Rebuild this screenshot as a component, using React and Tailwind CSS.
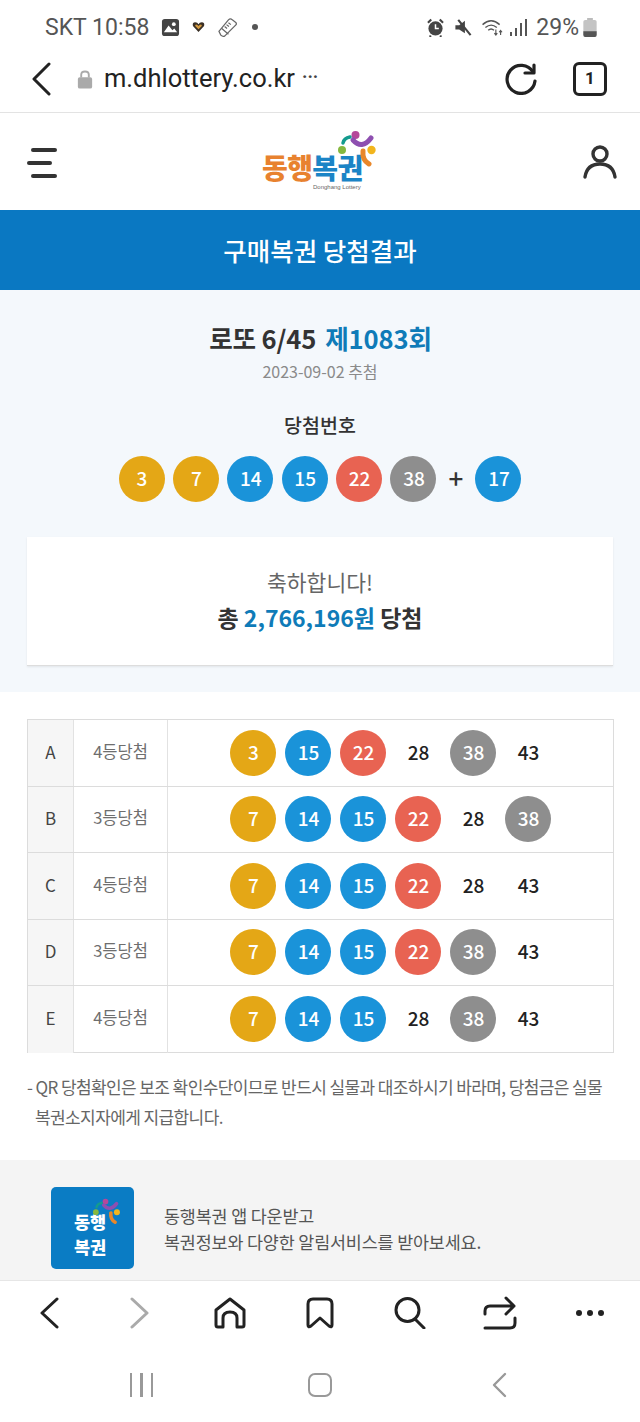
const Y = "bg-[#e4a716] text-white", Bl = "bg-[#1a93d9] text-white", R = "bg-[#e86352] text-white", G = "bg-[#8e8e8e] text-white", N = "bg-transparent text-[#222]";
const colorOf = (n) => (n <= 10 ? Y : n <= 20 ? Bl : n <= 30 ? R : G);

function Ball({ n, plain }) {
  return (
    <div className={`w-[46px] h-[46px] rounded-full flex items-center justify-center text-[19px] font-medium leading-none shrink-0 pb-[3px] pl-[1px] ${plain ? N : colorOf(n)}`}>
      {n}
    </div>
  );
}

function Figures({ className }) {
  return (
    <svg viewBox="0 0 42 38" className={className} fill="none" strokeLinecap="round">
      <circle cx="17.5" cy="5" r="4" fill="#b5489a" />
      <path d="M15 10 Q24 20 33 8" stroke="#8e4fb0" strokeWidth="5" />
      <circle cx="4" cy="20" r="4" fill="#86b83f" />
      <path d="M5 13 Q6 8 12 7" stroke="#149b8e" strokeWidth="3.5" />
      <circle cx="33.5" cy="20" r="4.2" fill="#f2b51d" />
      <path d="M31 34 Q24 30 25 21" stroke="#e8872a" strokeWidth="5" />
    </svg>
  );
}

function Row({ label, rank, nums, last }) {
  return (
    <div className={`flex h-[66.5px] ${last ? "" : "border-b border-[#dcdcdc]"}`}>
      <div className="w-[46px] bg-[#f6f6f6] border-r border-[#e2e2e2] flex items-center justify-center text-[17px] text-[#444] pb-[3px]">{label}</div>
      <div className="w-[94px] border-r border-[#e2e2e2] flex items-center justify-center text-[16.5px] text-[#6e6e6e] pb-[3px]">{rank}</div>
      <div className="flex-1 flex items-center justify-center gap-[9px]">
        {nums.map(([n, plain], i) => <Ball key={i} n={n} plain={plain} />)}
      </div>
    </div>
  );
}

const p = (n) => [n, true];
const b = (n) => [n, false];
const rows = [
  ["A", "4등당첨", [b(3), b(15), b(22), p(28), b(38), p(43)]],
  ["B", "3등당첨", [b(7), b(14), b(15), b(22), p(28), b(38)]],
  ["C", "4등당첨", [b(7), b(14), b(15), b(22), p(28), p(43)]],
  ["D", "3등당첨", [b(7), b(14), b(15), b(22), b(38), p(43)]],
  ["E", "4등당첨", [b(7), b(14), b(15), p(28), b(38), p(43)]],
];

export default function App() {
  return (
    <div className="w-[640px] h-[1422px] overflow-hidden bg-white flex flex-col font-['Noto_Sans_CJK_KR','Noto_Sans',sans-serif] text-[#333]">
      {/* status bar */}
      <div className="h-[50px] shrink-0 flex items-center pl-[45px] pr-[43px] pt-[4px] font-['Roboto',sans-serif] text-[#555]">
        <span className="text-[23px] leading-none w-[115px]">SKT 10:58</span>
        <svg viewBox="0 0 20 20" className="w-[19px] h-[19px] ml-[1px]">
          <rect x="1" y="1" width="18" height="18" rx="3" fill="#444" />
          <circle cx="13.5" cy="6.5" r="2" fill="#fff" />
          <path d="M3 15 L8 8 L12 13 L14 11 L17 15 Z" fill="#fff" />
        </svg>
        <svg viewBox="0 0 14 12" className="w-[13px] h-[12px] ml-[12px]">
          <path d="M7 11.5 L1 5 Q0 1 3.5 1 Q6 1 7 3 Q8 1 10.5 1 Q14 1 13 5 Z" fill="#3a3026" />
          <path d="M7 8.5 L3.5 5 Q3 3.2 4.5 3.2 Q6 3.2 7 5 Q8 3.2 9.5 3.2 Q11 3.2 10.5 5 Z" fill="#d3993f" />
        </svg>
        <svg viewBox="0 0 22 22" className="w-[21px] h-[21px] ml-[12px]" fill="none" stroke="#666" strokeWidth="1.3" strokeLinejoin="round">
          <path d="M2 15 L12 3 Q14 1 16 3 L20 6 Q21 8 19 9 L8 20 Q6 21 4 19 Z" />
          <path d="M5 12 L12 18 M12 6 L14.5 8 M10 8 L12.5 10 M8 10 L10.5 12" />
        </svg>
        <div className="w-[6px] h-[6px] rounded-full bg-[#555] ml-[14px]" />
        <div className="flex-1" />
        <svg viewBox="0 0 18 20" className="w-[17px] h-[19px]">
          <circle cx="9" cy="11" r="7.5" fill="#444" />
          <path d="M1 5 L4.5 1.5 M17 5 L13.5 1.5 M4 18.5 L3 20 M14 18.5 L15 20" stroke="#444" strokeWidth="2.2" />
          <path d="M9 6.5 V11 H12.5" stroke="#fff" strokeWidth="1.6" fill="none" />
        </svg>
        <svg viewBox="0 0 18 20" className="w-[18px] h-[19px] ml-[10px]">
          <path d="M1 7.5 H5 L11 3 V16 L5 12 H1 Z" fill="#444" />
          <path d="M4 2 L17 18" stroke="#444" strokeWidth="2.2" />
        </svg>
        <svg viewBox="0 0 24 20" className="w-[24px] h-[19px] ml-[9px]" fill="none" stroke="#555" strokeWidth="1.5">
          <path d="M1 7 Q10 -1 19 7 M4 10 Q10 5 16 10 M7 13 Q10 10 13 13" />
          <path d="M15 12 V18 M13.5 16 L15 18 L16.5 16 M20 18 V13 M18.5 15 L20 13 L21.5 15" strokeWidth="1.2" />
        </svg>
        <svg viewBox="0 0 17 19" className="w-[17px] h-[19px] ml-[5px]" fill="#555">
          <rect x="0" y="14" width="2" height="4" />
          <rect x="5" y="10" width="2" height="8" />
          <rect x="10" y="5" width="2" height="13" />
          <rect x="15" y="1" width="2" height="17" />
        </svg>
        <span className="text-[23px] leading-none ml-[9px]">29%</span>
        <svg viewBox="0 0 14 20" className="w-[14px] h-[19px] ml-[4px]">
          <rect x="4" y="0" width="6" height="3" fill="#bbb" />
          <rect x="0" y="2" width="14" height="18" rx="2" fill="#c4c4c4" />
          <path d="M0 14 H14 V18 Q14 20 12 20 H2 Q0 20 0 18 Z" fill="#555" />
        </svg>
      </div>

      {/* url bar */}
      <div className="h-[63px] shrink-0 flex items-center pl-[31px] pr-[33px] border-b border-[#e3e3e3] pb-[4px]">
        <svg viewBox="0 0 20 34" className="w-[20px] h-[34px]" fill="none" stroke="#222" strokeWidth="3" strokeLinecap="round" strokeLinejoin="round">
          <path d="M18 2 L3 17 L18 32" />
        </svg>
        <svg viewBox="0 0 16 20" className="w-[16px] h-[19px] ml-[26px]">
          <path d="M4 8 V5 Q4 1.5 8 1.5 Q12 1.5 12 5 V8" fill="none" stroke="#aaa" strokeWidth="2" />
          <rect x="0.5" y="7.5" width="15" height="12" rx="2" fill="#aaa" />
        </svg>
        <span className="ml-[11px] font-['Roboto',sans-serif] text-[25.5px] leading-none text-[#222]">m.dhlottery.co.kr</span>
        <span className="ml-[7px] font-['Roboto',sans-serif] text-[18px] leading-none text-[#444] -mt-[4px] font-bold">···</span>
        <div className="flex-1" />
        <svg viewBox="0 0 32 32" className="w-[32px] h-[32px]" fill="none" stroke="#222" strokeWidth="3.2" strokeLinecap="round" strokeLinejoin="round">
          <path d="M28 9 A14 14 0 1 0 30 18" />
          <path d="M29 2 V10 H20" />
        </svg>
        <div className="w-[34px] h-[34px] ml-[36px] border-[3px] border-[#222] rounded-[6px] flex items-center justify-center text-[17px] font-bold font-['Roboto',sans-serif] text-[#222]">1</div>
      </div>

      {/* header */}
      <div className="h-[97px] shrink-0 flex items-center justify-between pl-[27px] pr-[23px]">
        <div className="flex flex-col gap-[9px] w-[30px] mt-[2px]">
          <div className="w-[26px] h-[4px] rounded-full bg-[#333] ml-[4px]" />
          <div className="w-[25px] h-[4px] rounded-full bg-[#333]" />
          <div className="w-[26px] h-[4px] rounded-full bg-[#333] ml-[4px]" />
        </div>
        <div className="relative w-[120px] h-[66px] mt-[3px]">
          <div className="absolute left-[2px] top-[20px] text-[28px] font-black leading-[34px] tracking-[-0.6px] whitespace-nowrap">
            <span className="text-[#e8822f]">동행</span><span className="text-[#1b84c6]">복권</span>
          </div>
          <div className="absolute left-[53px] top-[53px] text-[6px] leading-[8px] text-[#666] font-['Liberation_Sans',sans-serif] whitespace-nowrap">Donghang Lottery</div>
          <Figures className="absolute left-[78px] top-[0px] w-[42px] h-[38px]" />
        </div>
        <svg viewBox="0 0 34 34" className="w-[34px] h-[34px]" fill="none" stroke="#333" strokeWidth="3.4" strokeLinecap="round">
          <circle cx="17" cy="9" r="7" />
          <path d="M2 32 Q4 19 17 19 Q30 19 32 32" />
        </svg>
      </div>

      {/* blue title */}
      <div className="h-[80px] shrink-0 bg-[#0a78c2] flex items-center justify-center text-white text-[25.5px] font-medium">구매복권 당첨결과</div>

      {/* summary */}
      <div className="h-[402px] shrink-0 bg-[#f4f8fc] flex flex-col items-center px-[27px]">
        <div className="mt-[28px] h-[40px] flex items-center text-[25.6px] font-bold text-[#333] leading-none tracking-[-0.15px] pl-[1px]">
          로또 6/45<span className="text-[#0f7bb8] ml-[9px]">제1083회</span>
        </div>
        <div className="mt-[1px] h-[24px] flex items-center text-[16px] text-[#8a8a8a]">2023-09-02 추첨</div>
        <div className="mt-[28px] h-[28px] flex items-center text-[19.5px] font-medium text-[#333]">당첨번호</div>
        <div className="mt-[17px] flex items-center">
          <div className="flex gap-[8.4px]">
            {[3, 7, 14, 15, 22, 38].map((n) => <Ball key={n} n={n} />)}
          </div>
          <div className="w-[39px] flex items-center justify-center text-[26px] font-medium text-[#333] leading-none pb-[3px]">+</div>
          <Ball n={17} />
        </div>
        <div className="mt-[35px] w-full h-[129px] bg-white border-b border-[#ddd] shadow-[0_1px_2px_rgba(0,0,0,0.08)] flex flex-col items-center justify-center pb-[3px]">
          <div className="text-[21.5px] text-[#666] leading-[34px]">축하합니다!</div>
          <div className="text-[23px] font-bold text-[#333] leading-[36px]">총 <span className="text-[#0f7bb8]">2,766,196원</span> 당첨</div>
        </div>
      </div>

      {/* results */}
      <div className="h-[468px] shrink-0 pl-[27px] pr-[26px] pt-[27px]">
        <div className="border border-[#dcdcdc] h-[334px]">
          {rows.map(([l, r, nums], i) => <Row key={l} label={l} rank={r} nums={nums} last={i === 4} />)}
        </div>
        <div className="mt-[19px] text-[17px] leading-[30px] text-[#666] tracking-[-0.6px]">
          <div className="whitespace-nowrap">- QR 당첨확인은 보조 확인수단이므로 반드시 실물과 대조하시기 바라며, 당첨금은 실물</div>
          <div className="pl-[8px]">복권소지자에게 지급합니다.</div>
        </div>
      </div>

      {/* app banner */}
      <div className="h-[120px] shrink-0 bg-[#f4f4f4] flex items-center pl-[51px] pt-[15px]">
        <div className="relative w-[83px] h-[82px] rounded-[5px] bg-[#0a7cc4]">
          <div className="absolute left-[23px] top-[22px] text-[17.5px] font-black leading-[25.5px] text-white">동행<br />복권</div>
          <Figures className="absolute left-[42px] top-[8px] w-[30px] h-[33px]" />
        </div>
        <div className="ml-[30px] mt-[2px] text-[17.4px] leading-[26px] text-[#555] tracking-[-0.15px]">
          <div>동행복권 앱 다운받고</div>
          <div>복권정보와 다양한 알림서비스를 받아보세요.</div>
        </div>
      </div>

      {/* browser toolbar */}
      <div className="h-[65px] shrink-0 border-t border-[#e6e6e6] grid grid-cols-7 px-[5px] bg-white">
        <div className="flex items-center justify-center pr-[3px]">
          <svg viewBox="0 0 20 32" className="w-[20px] h-[32px]" fill="none" stroke="#222" strokeWidth="3" strokeLinecap="round" strokeLinejoin="round"><path d="M18 2 L3 16 L18 30" /></svg>
        </div>
        <div className="flex items-center justify-center">
          <svg viewBox="0 0 20 32" className="w-[20px] h-[32px]" fill="none" stroke="#aaa" strokeWidth="3" strokeLinecap="round" strokeLinejoin="round"><path d="M2 2 L17 16 L2 30" /></svg>
        </div>
        <div className="flex items-center justify-center">
          <svg viewBox="0 0 34 32" className="w-[34px] h-[32px]" fill="none" stroke="#222" strokeWidth="3" strokeLinejoin="round"><path d="M3 13 L17 2 L31 13 V28 Q31 30 29 30 H24 V21 Q24 15 17 15 Q10 15 10 21 V30 H5 Q3 30 3 28 Z" /></svg>
        </div>
        <div className="flex items-center justify-center">
          <svg viewBox="0 0 30 32" className="w-[30px] h-[32px]" fill="none" stroke="#222" strokeWidth="3" strokeLinejoin="round"><path d="M3 7 Q3 2 8 2 H22 Q27 2 27 7 V28 Q27 31 24 29 L15 21 L6 29 Q3 31 3 28 Z" /></svg>
        </div>
        <div className="flex items-center justify-center">
          <svg viewBox="0 0 32 32" className="w-[32px] h-[32px]" fill="none" stroke="#222" strokeWidth="3" strokeLinecap="round"><circle cx="13.5" cy="13" r="11.5" /><path d="M21 22 L30 31" /></svg>
        </div>
        <div className="flex items-center justify-center">
          <svg viewBox="0 0 34 34" className="w-[34px] h-[34px]" fill="none" stroke="#222" strokeWidth="3" strokeLinecap="round" strokeLinejoin="round">
            <path d="M2 18 V15 Q2 10 7 10 H31 M23 2 L31 10 L23 18" />
            <path d="M2 32 H27 Q32 32 32 27 V22" />
          </svg>
        </div>
        <div className="flex items-center justify-center gap-[5px]">
          <div className="w-[6px] h-[6px] rounded-full bg-[#222]" />
          <div className="w-[6px] h-[6px] rounded-full bg-[#222]" />
          <div className="w-[6px] h-[6px] rounded-full bg-[#222]" />
        </div>
      </div>

      {/* system nav */}
      <div className="flex-1 grid grid-cols-3 px-[52px] items-center pt-[2px]">
        <div className="flex justify-center gap-[8px]">
          <div className="w-[2.5px] h-[24px] bg-[#999]" />
          <div className="w-[2.5px] h-[24px] bg-[#999]" />
          <div className="w-[2.5px] h-[24px] bg-[#999]" />
        </div>
        <div className="flex justify-center">
          <div className="w-[24px] h-[24px] border-[2.5px] border-[#999] rounded-[7px]" />
        </div>
        <div className="flex justify-center">
          <svg viewBox="0 0 16 26" className="w-[16px] h-[26px]" fill="none" stroke="#999" strokeWidth="2.4" strokeLinecap="round" strokeLinejoin="round"><path d="M14 2 L3 13 L14 24" /></svg>
        </div>
      </div>
    </div>
  );
}
